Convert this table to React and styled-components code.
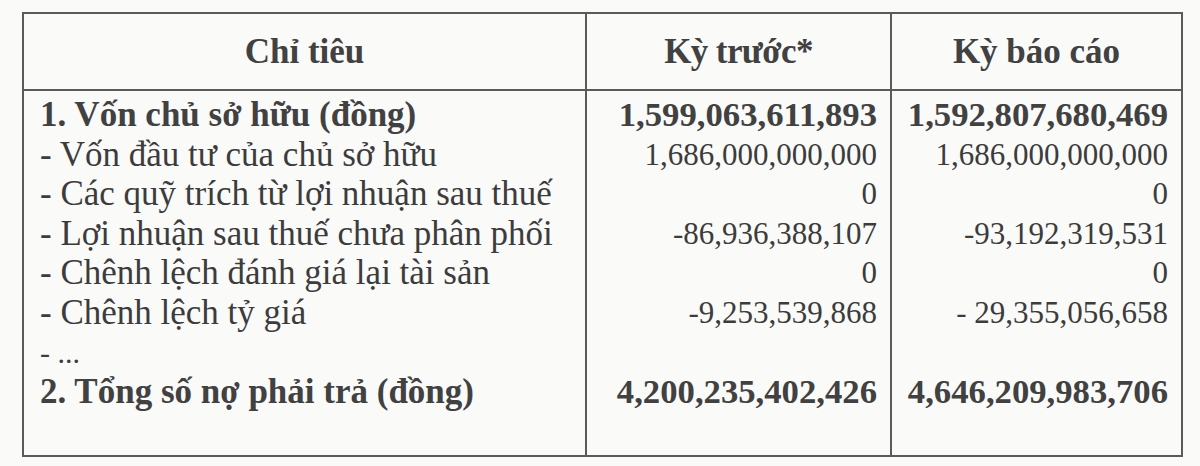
import styled, { createGlobalStyle } from "styled-components";

const GlobalStyle = createGlobalStyle`
  html, body {
    margin: 0;
    padding: 0;
    background: #fafaf9;
  }
  body {
    font-family: "Liberation Serif", "Times New Roman", serif;
    color: #3a3a3a;
  }
`;

const rows = [
  { label: "1. Vốn chủ sở hữu (đồng)", prev: "1,599,063,611,893", cur: "1,592,807,680,469", bold: true },
  { label: "- Vốn đầu tư của chủ sở hữu", prev: "1,686,000,000,000", cur: "1,686,000,000,000" },
  { label: "- Các quỹ trích từ lợi nhuận sau thuế", prev: "0", cur: "0" },
  { label: "- Lợi nhuận sau thuế chưa phân phối", prev: "-86,936,388,107", cur: "-93,192,319,531" },
  { label: "- Chênh lệch đánh giá lại tài sản", prev: "0", cur: "0" },
  { label: "- Chênh lệch tỷ giá", prev: "-9,253,539,868", cur: "- 29,355,056,658" },
  { label: "- ...", prev: "", cur: "", small: true },
  { label: "2. Tổng số nợ phải trả (đồng)", prev: "4,200,235,402,426", cur: "4,646,209,983,706", bold: true },
];

const Page = () => {
  return (
    <Wrapper>
      <GlobalStyle />
      <Table>
        <colgroup>
          <col style={{ width: 563 }} />
          <col style={{ width: 305 }} />
          <col style={{ width: 291 }} />
        </colgroup>
        <thead>
          <tr>
            <HeadCell>Chỉ tiêu</HeadCell>
            <HeadCell $tight>Kỳ trước*</HeadCell>
            <HeadCell>Kỳ báo cáo</HeadCell>
          </tr>
        </thead>
        <tbody>
          {rows.map((r, i) => (
            <Row key={i} $first={i === 0}>
              <LabelCell $bold={r.bold} $small={r.small}>{r.label}</LabelCell>
              <NumberCell $bold={r.bold}>{r.prev}</NumberCell>
              <NumberCell $bold={r.bold}>{r.cur}</NumberCell>
            </Row>
          ))}
          <SpacerRow>
            <td />
            <td />
            <td />
          </SpacerRow>
        </tbody>
      </Table>
    </Wrapper>
  );
};

const Wrapper = styled.div`
  padding: 12px 0 0 22px;
  width: 1200px;
  height: 466px;
  box-sizing: border-box;
`;

const Table = styled.table`
  table-layout: fixed;
  border-collapse: collapse;
  width: 1160px;
  border: 2px solid #5a5a5a;

  td {
    border-left: 2px solid #5a5a5a;
    border-right: 2px solid #5a5a5a;
    padding: 0;
  }
`;

const HeadCell = styled.th`
  height: 75px;
  border: 2px solid #5a5a5a;
  font-size: 35px;
  font-weight: bold;
  letter-spacing: ${(p) => (p.$tight ? "-0.6px" : "0")};
  color: #414141;
  text-align: center;
  vertical-align: middle;
  padding: 0;
`;

const Row = styled.tr`
  td {
    padding-top: ${(p) => (p.$first ? "4px" : "0")};
  }
`;

const LabelCell = styled.td`
  height: 39.6px;
  line-height: 39.6px;
  white-space: nowrap;
  overflow: hidden;
  font-size: ${(p) => (p.$small ? "30px" : "35px")};
  font-weight: ${(p) => (p.$bold ? "bold" : "normal")};
  color: ${(p) => (p.$bold ? "#414141" : "#3c3c3c")};
  text-align: left;
  && {
    padding-left: 16px;
  }
`;

const NumberCell = styled.td`
  height: 39.6px;
  line-height: 39.6px;
  white-space: nowrap;
  overflow: hidden;
  font-size: ${(p) => (p.$bold ? "34.7px" : "31px")};
  font-weight: ${(p) => (p.$bold ? "bold" : "normal")};
  color: ${(p) => (p.$bold ? "#414141" : "#3c3c3c")};
  text-align: right;
  && {
    padding-right: 13px;
  }
`;

const SpacerRow = styled.tr`
  td {
    height: 43px;
  }
`;

export default Page;
